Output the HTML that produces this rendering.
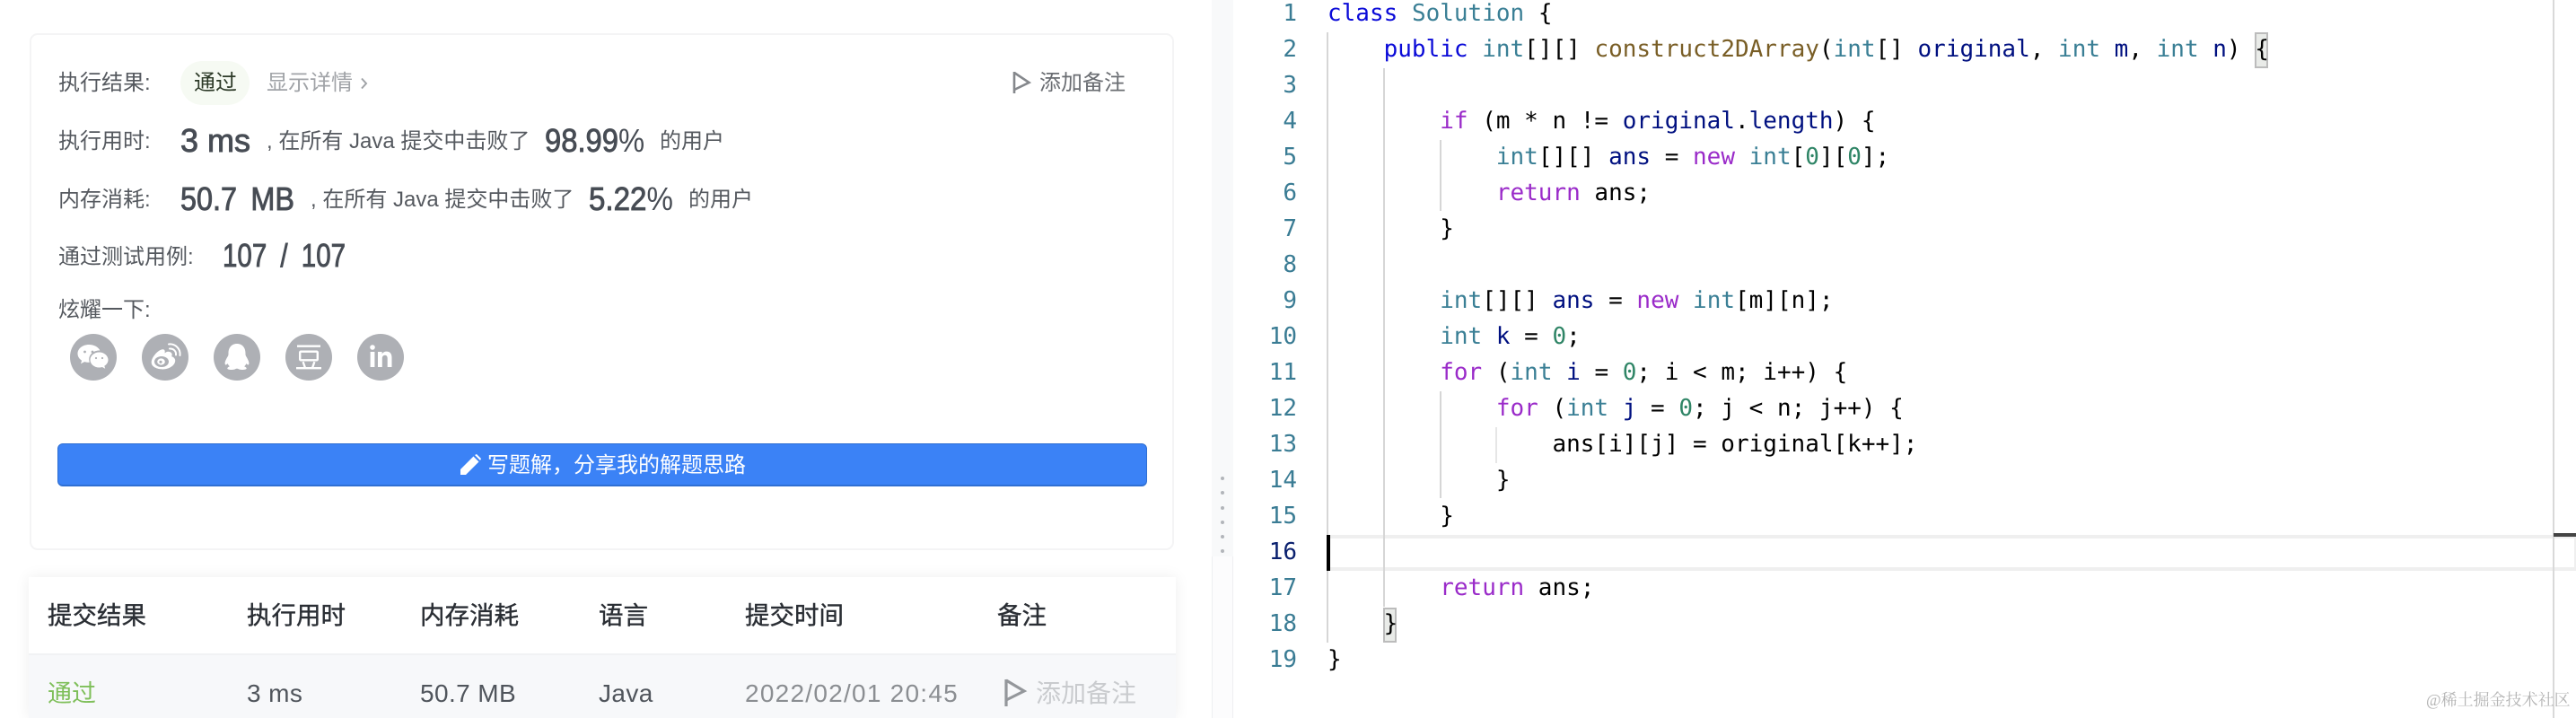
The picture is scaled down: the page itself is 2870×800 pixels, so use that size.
<!DOCTYPE html>
<html lang="zh-CN">
<head>
<meta charset="utf-8">
<title>Submission</title>
<style>
html,body{margin:0;padding:0;background:#fff;width:2870px;height:800px;overflow:hidden;}
body{position:relative;font-family:"Liberation Sans","Noto Sans CJK SC",sans-serif;}
.a{position:absolute;white-space:pre;line-height:40px;height:40px;}
.s{font-size:24px;color:#55595f;}
.b{font-size:36px;color:#474c54;-webkit-text-stroke:.9px #474c54;transform-origin:left center;}
.b i{font-style:normal;-webkit-text-stroke:0;}
.h{font-size:27.5px;color:#2a2e34;-webkit-text-stroke:.4px #2a2e34;}
.r{font-size:28px;color:#50555c;letter-spacing:.4px;}
.ic{position:absolute;top:372px;width:52px;height:52px;}
.box{position:absolute;box-sizing:border-box;}
.guide{position:absolute;width:2px;background:#d6d6d6;}
#code,#nums{position:absolute;top:-5px;margin:0;font-family:"DejaVu Sans Mono","Liberation Mono",monospace;font-size:26px;line-height:40px;text-rendering:geometricPrecision;white-space:pre;}
#code{left:1479px;color:#000;}
#nums{left:1380px;width:65px;text-align:right;color:#3a7c94;}
#nums b{font-weight:normal;color:#0b216f;}
.k{color:#0a0ad8}.t{color:#3a7f95}.f{color:#795e26}.v{color:#001080}.c{color:#9a2bc9}.n{color:#2f8566}
.dot{position:absolute;left:1360px;width:4px;height:4px;border-radius:50%;background:#b2b5ba;}
</style>
</head>
<body>

<!-- result card -->
<div class="box" style="left:33px;top:37px;width:1275px;height:576px;border:2px solid #f4f4f5;border-radius:9px;background:#fff;"></div>

<span class="a s" style="left:65px;top:73px;">执行结果:</span>
<div class="box" style="left:201px;top:68px;width:77px;height:49px;border-radius:25px;background:#f6faf3;"></div>
<span class="a" style="left:216px;top:73px;font-size:24px;color:#2d3a28;">通过</span>
<span class="a" style="left:297px;top:73px;font-size:24px;color:#a0a3a7;">显示详情</span>
<svg class="box" style="left:400px;top:85px;" width="10" height="16" viewBox="0 0 10 16"><path d="M3 2.5 L8 8 L3 13.500" fill="none" stroke="#a0a3a7" stroke-width="2"/></svg>

<svg class="box" style="left:1127px;top:78px;" width="24" height="28" viewBox="0 0 24 28"><path d="M3 2 V26 M3 3 L19.500 14 L3 22" fill="none" stroke="#85888c" stroke-width="2.600"/></svg>
<span class="a" style="left:1158px;top:73px;font-size:24px;color:#6a6d72;">添加备注</span>

<span class="a s" style="left:65px;top:138px;">执行用时:</span>
<span class="a b" style="left:201px;top:137px;">3 ms</span>
<span class="a s" style="left:297px;top:138px;">, 在所有 Java 提交中击败了</span>
<span class="a b" style="left:607px;top:137px;transform:scaleX(.91);">98.99<i>%</i></span>
<span class="a s" style="left:735px;top:138px;">的用户</span>

<span class="a s" style="left:65px;top:203px;">内存消耗:</span>
<span class="a b" style="left:201px;top:202px;transform:scaleX(.9);word-spacing:7px;">50.7 MB</span>
<span class="a s" style="left:346px;top:203px;">, 在所有 Java 提交中击败了</span>
<span class="a b" style="left:656px;top:202px;transform:scaleX(.92);">5.22<i>%</i></span>
<span class="a s" style="left:767px;top:203px;">的用户</span>

<span class="a s" style="left:65px;top:267px;">通过测试用例:</span>
<span class="a b" style="left:248px;top:265px;transform:scaleX(.82);word-spacing:8.500px;">107 / 107</span>

<span class="a s" style="left:65px;top:326px;">炫耀一下:</span>

<!-- share icons -->
<svg class="ic" style="left:78px" viewBox="0 0 52 52"><circle cx="26" cy="26" r="26" fill="#aeb0b5"/>
<path fill="#fff" d="M21 12c-7 0-12.500 4.500-12.500 10 0 3.200 1.800 5.900 4.600 7.700l-1.100 3.600 4.100-2.200c1.500.4 3 .7 4.700.7l1 0c-.4-1.100-.6-2.200-.6-3.300 0-5.600 5-10 11.200-10l.9 0C31.900 14.900 26.900 12 21 12z"/>
<path fill="#fff" d="M32.500 20.500c-5.500 0-10 3.800-10 8.500s4.500 8.500 10 8.500c1.200 0 2.300-.2 3.400-.5l3.300 1.800-.9-3c2.500-1.600 4.200-4 4.200-6.800 0-4.700-4.500-8.500-10-8.500z"/>
<circle cx="16.500" cy="20" r="1.400" fill="#aeb0b5"/><circle cx="25" cy="20" r="1.400" fill="#aeb0b5"/>
<circle cx="29" cy="27" r="1.100" fill="#aeb0b5"/><circle cx="36" cy="27" r="1.100" fill="#aeb0b5"/></svg>

<svg class="ic" style="left:158px" viewBox="0 0 52 52"><circle cx="26" cy="26" r="26" fill="#aeb0b5"/>
<path fill="#fff" d="M31 20c-2.200-.8-4 .2-5.500 1.500 .5-2 .2-3.500-1-4-2.500-1-7 2-10 5.800-2.600 3.200-3.800 6-3.800 8.500 0 5 6.500 7.700 12.500 7.700 7.500 0 14-4.500 14-9.700 0-3-2.700-4.200-4-4.700 1-2.500 .5-4-2.200-5.100z"/>
<ellipse cx="22" cy="31" rx="8" ry="6" fill="#aeb0b5"/><ellipse cx="21.500" cy="31" rx="4.300" ry="3.600" fill="#fff"/><circle cx="21" cy="31.300" r="1.600" fill="#aeb0b5"/>
<path fill="none" stroke="#fff" stroke-width="2" stroke-linecap="round" d="M31 16.500c4-.5 7.500 2.700 7 7M30 11.500c7-.8 13.500 5 12.500 12.500"/></svg>

<svg class="ic" style="left:238px" viewBox="0 0 52 52"><circle cx="26" cy="26" r="26" fill="#aeb0b5"/>
<path fill="#fff" d="M26 11c-6.500 0-9.500 5-9.500 10.500 0 1.200 0 2-.3 2.800-1.500 2.800-3.600 6-3.600 8.500 0 1.500 .7 2 1.500 1.600l1.500-1.300c.5 1.200 1.300 2.300 2.300 3.100-1.500.6-2.600 1.400-2.600 2.300 0 1 2 1.500 5 1.500 2.200 0 3.900-.5 4.700-1.200h2c.8 .7 2.500 1.200 4.700 1.200 3 0 5-.5 5-1.500 0-.9-1.100-1.700-2.600-2.300 1-.8 1.800-1.900 2.300-3.100l1.500 1.300c.8 .4 1.500-.1 1.500-1.600 0-2.500-2.100-5.700-3.600-8.500-.3-.8-.3-1.600-.3-2.800C35.500 16 32.500 11 26 11z"/></svg>

<svg class="ic" style="left:318px" viewBox="0 0 52 52"><circle cx="26" cy="26" r="26" fill="#aeb0b5"/>
<path fill="#fff" d="M13 12.500h26v2.400H13zM12 37h28v2.400H12z"/>
<rect x="16.200" y="19.700" width="19.600" height="9.600" rx="1" fill="none" stroke="#fff" stroke-width="2.400"/>
<path fill="#fff" d="M18.500 31.500l2.200-.7 2.200 6.200-2.200.7zM33.500 31.500l-2.200-.7-2.200 6.200 2.200.7z"/></svg>

<svg class="ic" style="left:398px" viewBox="0 0 52 52"><circle cx="26" cy="26" r="26" fill="#aeb0b5"/>
<circle cx="17" cy="15" r="2.800" fill="#fff"/><path fill="#fff" d="M14.600 20h4.800v17h-4.800zM23 20h4.600v2.400c1-1.800 2.900-2.800 5-2.800 4.100 0 5.900 2.600 5.900 6.900V37h-4.800v-9.600c0-2.300-.9-3.700-2.800-3.700-2 0-3.100 1.500-3.100 3.700V37H23z"/></svg>

<!-- blue button -->
<div class="box" style="left:64px;top:494px;width:1214px;height:48px;background:#3b82f6;border:1px solid #2f6fd3;border-bottom-width:2px;border-radius:6px;"></div>
<svg class="box" style="left:512px;top:506px;" width="24" height="24" viewBox="0 0 24 24"><path fill="#fff" d="M1 23v-6L15.500 2.500l6 6L7 23zM17 1l2-1 5 5-1 2z"/></svg>
<span class="a" style="left:543px;top:499px;font-size:24px;color:#fff;">写题解，分享我的解题思路</span>

<!-- table -->
<div class="box" style="left:32px;top:643px;width:1278px;height:157px;background:#fff;box-shadow:0 0 16px rgba(0,0,0,.07);"></div>
<div class="box" style="left:32px;top:728px;width:1278px;height:72px;background:#f7f8fa;border-top:2px solid #f1f2f4;"></div>

<span class="a h" style="left:53px;top:666px;">提交结果</span>
<span class="a h" style="left:275px;top:666px;">执行用时</span>
<span class="a h" style="left:468px;top:666px;">内存消耗</span>
<span class="a h" style="left:667px;top:666px;">语言</span>
<span class="a h" style="left:830px;top:666px;">提交时间</span>
<span class="a h" style="left:1111px;top:666px;">备注</span>

<span class="a r" style="left:53px;top:753px;font-size:27px;color:#7fbf5a;letter-spacing:0;">通过</span>
<span class="a r" style="left:275px;top:753px;">3 ms</span>
<span class="a r" style="left:468px;top:753px;">50.7 MB</span>
<span class="a r" style="left:667px;top:753px;">Java</span>
<span class="a r" style="left:830px;top:753px;color:#8b8e92;letter-spacing:1.250px;">2022/02/01 20:45</span>
<svg class="box" style="left:1117px;top:755px;" width="28" height="34" viewBox="0 0 28 34"><path d="M4 2 V32 M4 3 L24 15 L4 25" fill="none" stroke="#94979b" stroke-width="3.200"/></svg>
<span class="a" style="left:1154px;top:753px;font-size:28px;color:#c9cbce;">添加备注</span>

<!-- splitter -->
<div class="box" style="left:1350px;top:0;width:24px;height:620px;background:#f8f9fa;"></div>
<div class="box" style="left:1350px;top:620px;width:24px;height:180px;background:#fcfcfd;border-left:1px solid #eeeff1;border-right:1px solid #eeeff1;"></div>
<div class="dot" style="top:531px"></div><div class="dot" style="top:547px"></div><div class="dot" style="top:564px"></div>
<div class="dot" style="top:580px"></div><div class="dot" style="top:596px"></div><div class="dot" style="top:612px"></div>

<!-- editor decorations -->
<div class="box" style="left:1480px;top:596px;width:1390px;height:40px;border:4px solid #efefef;border-left:0;border-right-width:2px;"></div>
<div class="guide" style="left:1478px;top:36px;height:680px;"></div>
<div class="guide" style="left:1541px;top:76px;height:600px;"></div>
<div class="guide" style="left:1604px;top:156px;height:79px;"></div>
<div class="guide" style="left:1604px;top:436px;height:119px;"></div>
<div class="guide" style="left:1666px;top:476px;height:40px;background:#e6e6e6;"></div>
<div class="box" style="left:1541px;top:677px;width:15px;height:39px;background:#e9ebe8;border:2px solid #bcbcbc;"></div>
<div class="box" style="left:2512px;top:36px;width:15px;height:40px;background:#e9ebe8;border:2px solid #bcbcbc;"></div>
<div class="box" style="left:1478px;top:596px;width:4px;height:40px;background:#000;"></div>

<pre id="nums">1
2
3
4
5
6
7
8
9
10
11
12
13
14
15
<b>16</b>
17
18
19</pre>

<pre id="code"><span class="k">class</span> <span class="t">Solution</span> {
    <span class="k">public</span> <span class="t">int</span>[][] <span class="f">construct2DArray</span>(<span class="t">int</span>[] <span class="v">original</span>, <span class="t">int</span> <span class="v">m</span>, <span class="t">int</span> <span class="v">n</span>) {

        <span class="c">if</span> (m * n != <span class="v">original</span>.<span class="v">length</span>) {
            <span class="t">int</span>[][] <span class="v">ans</span> = <span class="c">new</span> <span class="t">int</span>[<span class="n">0</span>][<span class="n">0</span>];
            <span class="c">return</span> ans;
        }

        <span class="t">int</span>[][] <span class="v">ans</span> = <span class="c">new</span> <span class="t">int</span>[m][n];
        <span class="t">int</span> <span class="v">k</span> = <span class="n">0</span>;
        <span class="c">for</span> (<span class="t">int</span> <span class="v">i</span> = <span class="n">0</span>; i &lt; m; i++) {
            <span class="c">for</span> (<span class="t">int</span> <span class="v">j</span> = <span class="n">0</span>; j &lt; n; j++) {
                ans[i][j] = original[k++];
            }
        }

        <span class="c">return</span> ans;
    }
}</pre>

<!-- right ruler -->
<div class="box" style="left:2844px;top:0;width:2px;height:800px;background:#d9d9d9;"></div>
<div class="box" style="left:2845px;top:594px;width:25px;height:4px;background:#444;"></div>

<!-- watermark -->
<span class="a" style="left:2703px;top:760px;font-size:18px;color:#b4b4b4;font-family:'Liberation Serif','Noto Serif CJK SC',serif;">@稀土掘金技术社区</span>

</body>
</html>
